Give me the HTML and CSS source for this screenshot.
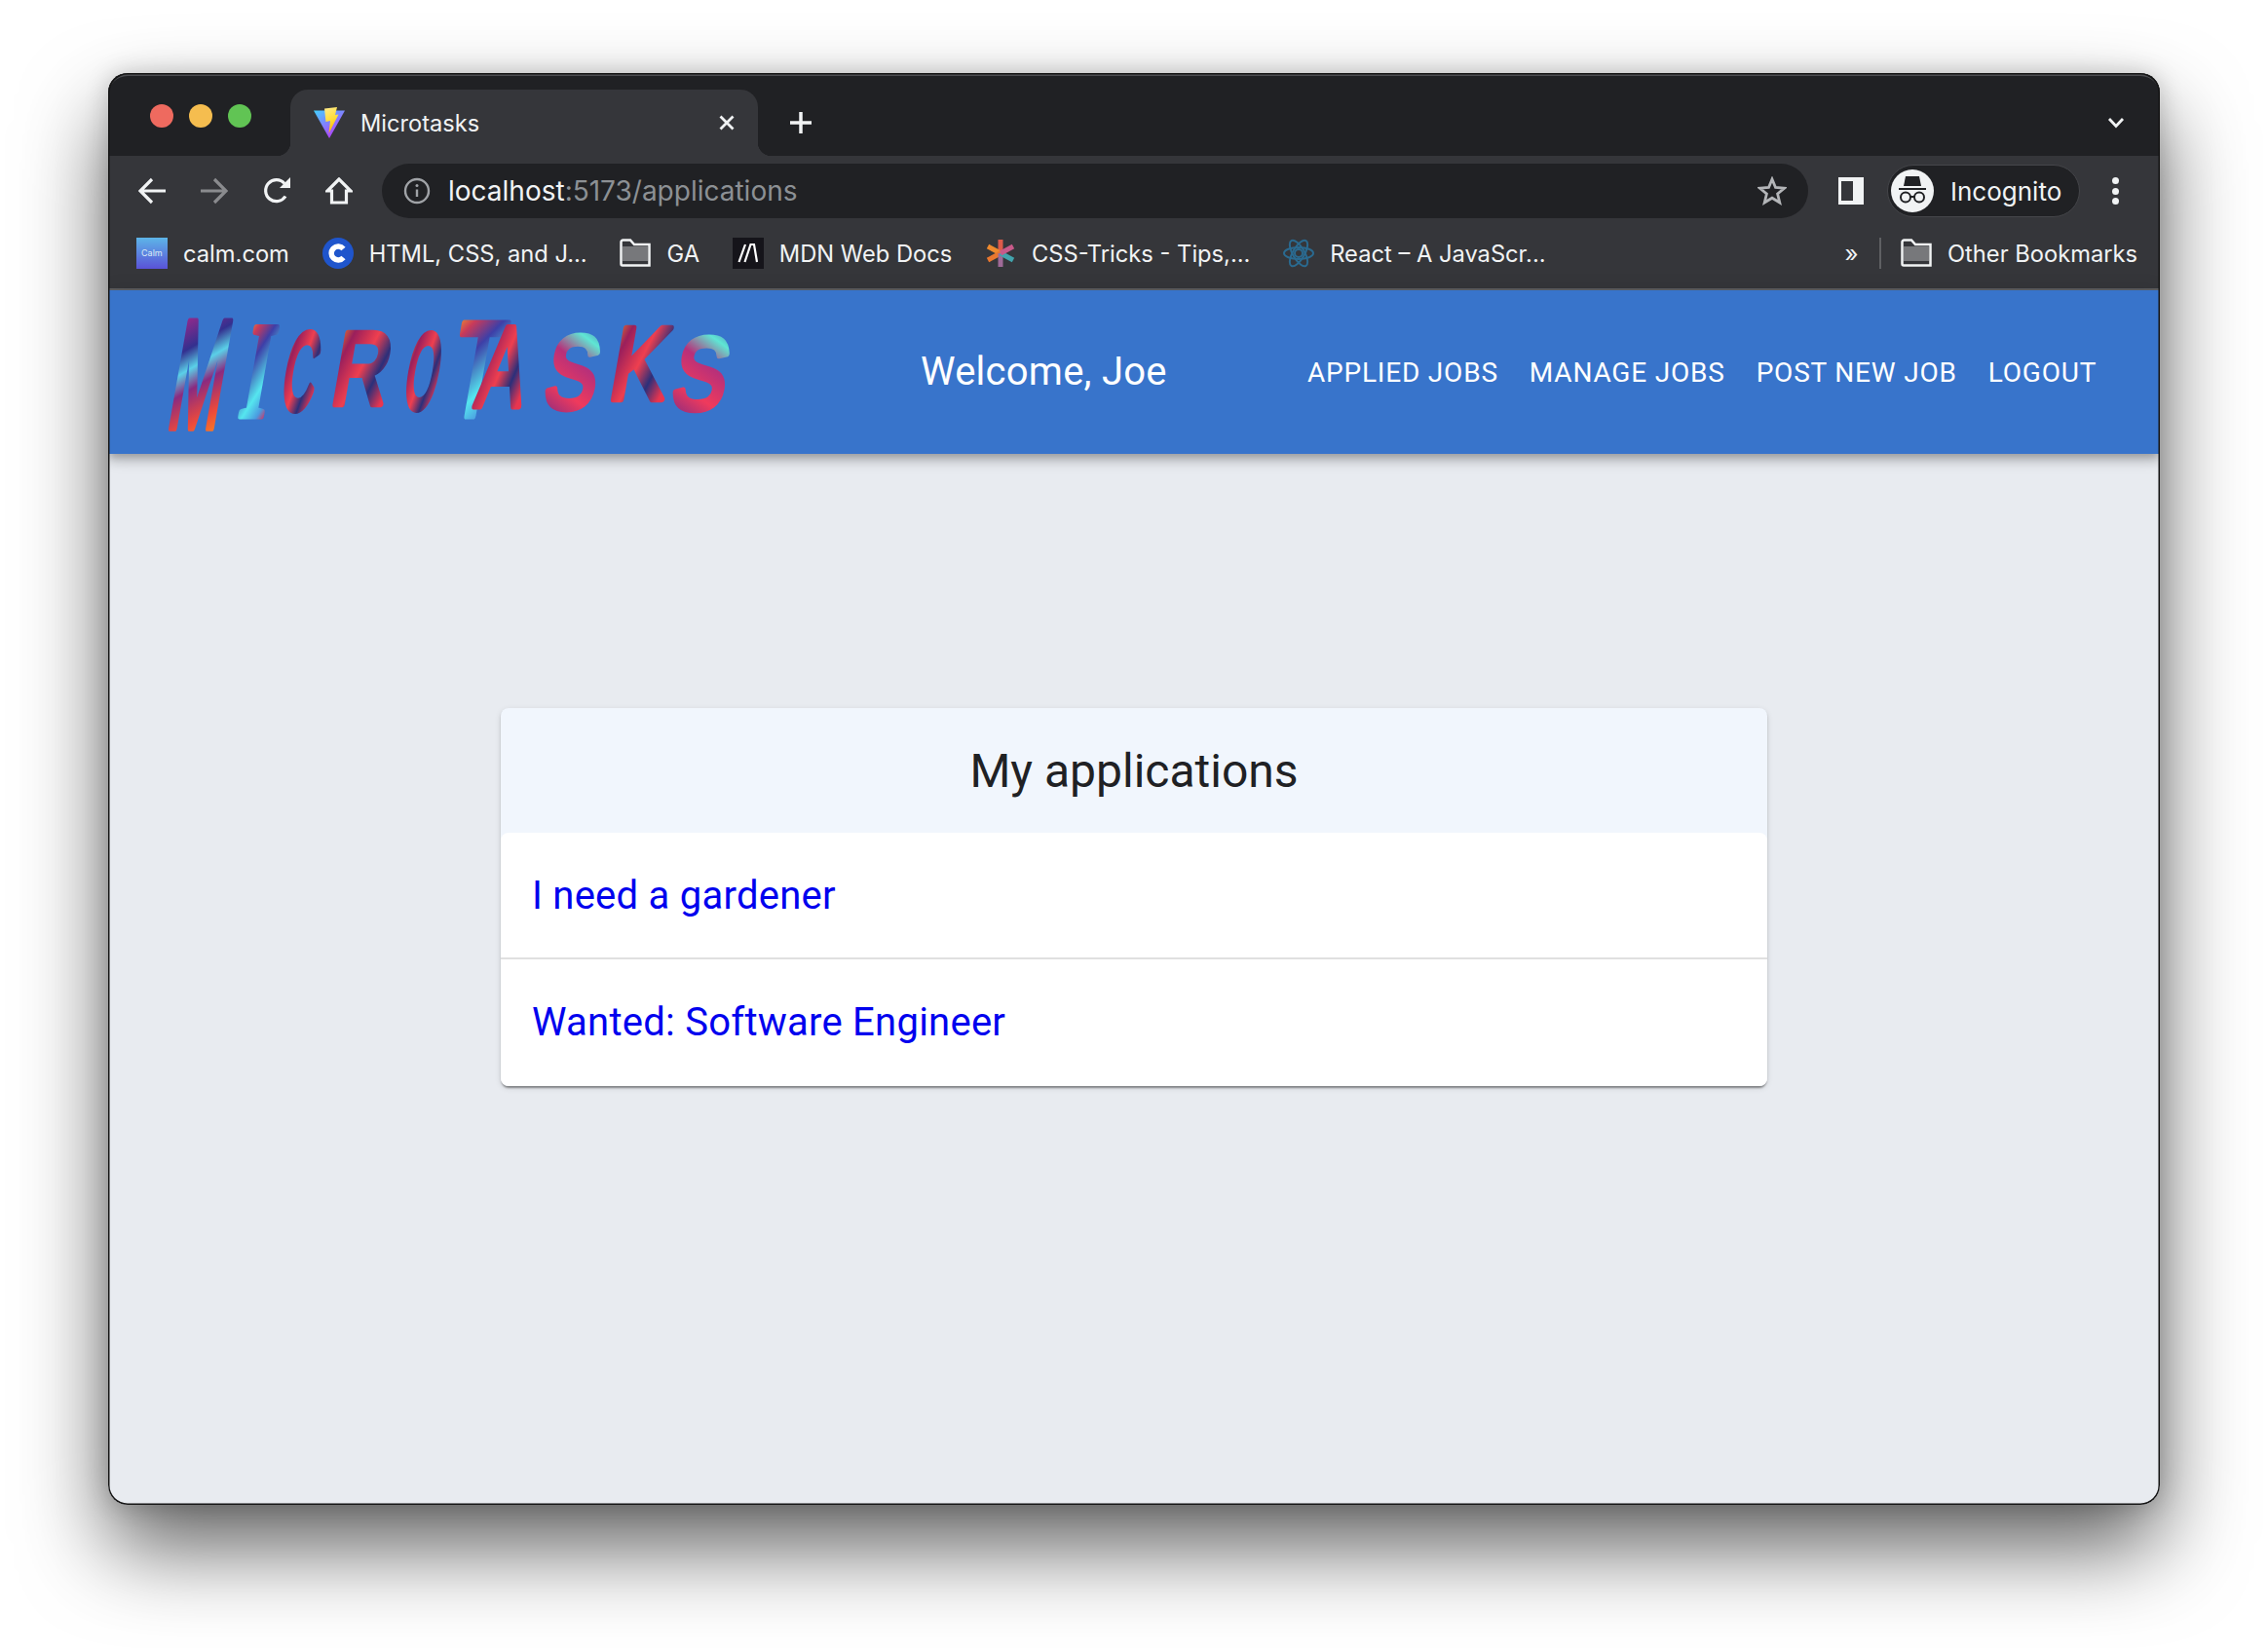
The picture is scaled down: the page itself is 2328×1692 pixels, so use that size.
FILE: index.html
```html
<!DOCTYPE html>
<html lang="en">
<head>
<meta charset="utf-8">
<title>Microtasks</title>
<link rel="stylesheet" href="styles.css">
</head>
<body>
<div class="window">
  <div class="tabstrip">
    <div class="lights"><span class="light red"></span><span class="light yellow"></span><span class="light green"></span></div>
    <div class="tab">
      <svg class="favicon-vite" viewBox="0 0 32 32">
        <defs>
          <linearGradient id="vt" x1="0" y1="0" x2="0.7" y2="1"><stop offset="0" stop-color="#41d1ff"/><stop offset="1" stop-color="#bd34fe"/></linearGradient>
          <linearGradient id="vb" x1="0.3" y1="0" x2="0.6" y2="1"><stop offset="0" stop-color="#ffea83"/><stop offset="0.5" stop-color="#ffdd35"/><stop offset="1" stop-color="#ffa800"/></linearGradient>
        </defs>
        <polygon points="0,3.5 32,3.5 16,32" fill="url(#vt)"/>
        <polygon points="11,1.5 24,0 22,8 25.5,7.5 15.5,27 17,14 12.5,15" fill="url(#vb)"/>
      </svg>
      <span class="tab-title">Microtasks</span>
      <svg class="tab-close" viewBox="0 0 16 16"><path d="M1.500 1.500 14.500 14.500M14.500 1.500 1.500 14.500"/></svg>
    </div>
    <svg class="new-tab" viewBox="0 0 24 24"><path d="M12 1V23M1 12H23"/></svg>
    <svg class="tab-menu" viewBox="0 0 18 12"><path d="M2 2 9 9.500 16 2"/></svg>
  </div>

  <div class="toolbar">
    <div class="navbtn"><svg class="ico" viewBox="0 0 28 28"><path d="M28 14H2M14 2 2 14 14 26"/></svg></div>
    <div class="navbtn off"><svg class="ico" viewBox="0 0 28 28"><path d="M0 14H26M14 2 26 14 14 26"/></svg></div>
    <div class="navbtn"><svg class="ico" viewBox="0 0 28 28"><path d="M23 19.500A11 11 0 1 1 22 6.500"/><polygon class="solid" points="28,0 28,11 17,11"/></svg></div>
    <div class="navbtn"><svg class="ico" viewBox="0 0 28 28"><path d="M14 2 2 14H6.500V26H21.500V14H26Z"/></svg></div>
    <div class="omnibox">
      <svg class="info" viewBox="0 0 28 28"><circle cx="14" cy="14" r="12"/><path d="M14 12.500V20"/><circle class="dot" cx="14" cy="8.500" r="1.500"/></svg>
      <span class="url"><span class="host">localhost</span>:5173/applications</span>
      <svg class="star" viewBox="0 0 30 30"><polygon points="15,3 18.500,11.500 27.500,12.200 20.600,18 22.800,27 15,22.200 7.200,27 9.400,18 2.500,12.200 11.500,11.500"/></svg>
    </div>
    <div class="sidepanel"><span class="sidepanel-hole"></span></div>
    <div class="profile">
      <svg class="avatar" viewBox="0 0 44 44">
        <circle cx="22" cy="22" r="22" fill="#f1f3f4"/>
        <polygon points="15,7 29,7 31,17 13,17" fill="#202124"/>
        <rect x="8" y="19" width="28" height="2" fill="#202124"/>
        <circle cx="15" cy="28.500" r="5" fill="none" stroke="#202124" stroke-width="2"/>
        <circle cx="29" cy="28.500" r="5" fill="none" stroke="#202124" stroke-width="2"/>
        <rect x="19" y="27" width="6" height="2" fill="#202124"/>
      </svg>
      <span class="profile-name">Incognito</span>
    </div>
    <div class="kebab"><span></span><span></span><span></span></div>
  </div>

  <div class="bookmarks">
    <div class="bm">
      <svg class="bm-ico" viewBox="0 0 32 32">
        <defs><linearGradient id="cg" x1="0" y1="0" x2="0" y2="1"><stop offset="0" stop-color="#5db5e8"/><stop offset="1" stop-color="#5a52d8"/></linearGradient></defs>
        <rect width="32" height="32" fill="url(#cg)"/>
        <text x="5" y="19" class="calm-mark">Calm</text>
      </svg>
      <span>calm.com</span>
    </div>
    <div class="bm">
      <svg class="bm-ico" viewBox="0 0 32 32"><circle cx="16" cy="16" r="16" fill="#1f55cc"/><path d="M21.500 11.500A7 7 0 1 0 21.500 20.500" fill="none" stroke="#fff" stroke-width="5.500"/></svg>
      <span>HTML, CSS, and J...</span>
    </div>
    <div class="bm">
      <svg class="bm-ico" viewBox="0 0 32 32"><path class="folder" d="M1.500 27V4.500A2 2 0 0 1 3.500 2.500H11L15 7H30.500V28.500H3A1.500 1.500 0 0 1 1.500 27Z"/><path class="folder-fill" d="M3 9H29V24H3Z"/></svg>
      <span>GA</span>
    </div>
    <div class="bm">
      <svg class="bm-ico" viewBox="0 0 32 32"><rect width="32" height="32" fill="#15141a"/><path d="M6.500 25 13 7M12.500 25 18.500 7H22L25 25" fill="none" stroke="#fff" stroke-width="2.200"/></svg>
      <span>MDN Web Docs</span>
    </div>
    <div class="bm">
      <svg class="bm-ico" viewBox="0 0 32 32">
        <g stroke-width="5">
          <line x1="16" y1="16" x2="16" y2="2" stroke="#dd5b4a"/>
          <line x1="16" y1="16" x2="3" y2="9" stroke="#ef8a2e"/>
          <line x1="16" y1="16" x2="3" y2="23" stroke="#e9772f"/>
          <line x1="16" y1="16" x2="16" y2="30" stroke="#a06a98"/>
          <line x1="16" y1="16" x2="29" y2="23" stroke="#42a4ad"/>
          <line x1="16" y1="16" x2="29" y2="9" stroke="#c85a8a"/>
        </g>
      </svg>
      <span>CSS-Tricks - Tips,...</span>
    </div>
    <div class="bm">
      <svg class="bm-ico" viewBox="0 0 32 32">
        <g fill="none" stroke="#2a6a90" stroke-width="2">
          <ellipse cx="16" cy="16" rx="15" ry="6"/>
          <ellipse cx="16" cy="16" rx="15" ry="6" transform="rotate(60 16 16)"/>
          <ellipse cx="16" cy="16" rx="15" ry="6" transform="rotate(120 16 16)"/>
          <circle cx="16" cy="16" r="4"/>
        </g>
      </svg>
      <span>React – A JavaScr...</span>
    </div>
    <span class="bm-more">»</span>
    <span class="bm-sep"></span>
    <div class="bm">
      <svg class="bm-ico" viewBox="0 0 32 32"><path class="folder" d="M1.500 27V4.500A2 2 0 0 1 3.500 2.500H11L15 7H30.500V28.500H3A1.500 1.500 0 0 1 1.500 27Z"/><path class="folder-fill" d="M3 9H29V24H3Z"/></svg>
      <span>Other Bookmarks</span>
    </div>
  </div>

  <div class="page">
    <header class="appbar">
      <svg class="logo" viewBox="0 0 620 168" role="img" aria-label="Microtasks">
        <defs>
          <linearGradient id="la" x1="0.3" y1="0" x2="0.5" y2="1">
            <stop offset="0" stop-color="#f08a2a"/><stop offset="0.14" stop-color="#8a2a8c"/><stop offset="0.32" stop-color="#33308f"/><stop offset="0.45" stop-color="#5ad0e8"/><stop offset="0.58" stop-color="#8a2a80"/><stop offset="0.8" stop-color="#ee4a3a"/><stop offset="1" stop-color="#f9921e"/>
          </linearGradient>
          <linearGradient id="lb" x1="0.2" y1="0" x2="0.6" y2="1">
            <stop offset="0" stop-color="#f5a623"/><stop offset="0.18" stop-color="#c93a5a"/><stop offset="0.38" stop-color="#3d3fa8"/><stop offset="0.7" stop-color="#55e6ef"/><stop offset="0.88" stop-color="#4a9ae0"/><stop offset="1" stop-color="#d92a5a"/>
          </linearGradient>
          <linearGradient id="lc" x1="0" y1="0" x2="1" y2="0.7">
            <stop offset="0" stop-color="#f7931e"/><stop offset="0.25" stop-color="#9a1f5c"/><stop offset="0.55" stop-color="#ef3f4f"/><stop offset="0.78" stop-color="#2b2f7a"/><stop offset="1" stop-color="#e8354f"/>
          </linearGradient>
          <linearGradient id="ld" x1="0.7" y1="0" x2="0.4" y2="1">
            <stop offset="0" stop-color="#4b5fb0"/><stop offset="0.2" stop-color="#5fe6d4"/><stop offset="0.42" stop-color="#b7307a"/><stop offset="0.7" stop-color="#ef3a5c"/><stop offset="1" stop-color="#7c2a86"/>
          </linearGradient>
        </defs>
        <g class="logo-letters">
          <text transform="translate(19.500,140.500) skewX(-10) scale(.65,1.58)" fill="url(#la)" stroke="url(#la)">M</text>
          <text class="serif" transform="translate(93.500,128.500) skewX(-10) scale(.85,1.38)" fill="url(#lb)" stroke="url(#lb)">I</text>
          <text transform="translate(136,121.500) skewX(-10) scale(.46,1.12)" fill="url(#lc)" stroke="url(#lc)">C</text>
          <text transform="translate(187.500,116.500) skewX(-10) scale(.79,1.06)" fill="url(#lc)" stroke="url(#lc)">R</text>
          <text transform="translate(262,120.500) skewX(-10) scale(.42,1.09)" fill="url(#lc)" stroke="url(#lc)">O</text>
          <text transform="translate(307.500,128.500) skewX(-10) scale(.82,1.38)" fill="url(#lb)" stroke="url(#lb)">T</text>
          <text transform="translate(336.500,118.500) skewX(-10) scale(.7,1.17)" fill="url(#lc)" stroke="url(#lc)">A</text>
          <text transform="translate(405.500,120.500) skewX(-10) scale(.79,1.06)" fill="url(#ld)" stroke="url(#ld)">S</text>
          <text transform="translate(472.500,111.500) skewX(-10) scale(.87,1.06)" fill="url(#lc)" stroke="url(#lc)">K</text>
          <text transform="translate(536.500,121.500) skewX(-10) scale(.82,1.05)" fill="url(#ld)" stroke="url(#ld)">S</text>
        </g>
      </svg>
      <div class="welcome">Welcome, Joe</div>
      <nav class="nav">
        <a class="nav-link">APPLIED JOBS</a>
        <a class="nav-link">MANAGE JOBS</a>
        <a class="nav-link">POST NEW JOB</a>
        <a class="nav-link">LOGOUT</a>
      </nav>
    </header>
    <main class="main">
      <section class="card">
        <h2 class="card-title">My applications</h2>
        <ul class="list">
          <li class="list-item"><a class="job">I need a gardener</a></li>
          <li class="list-item"><a class="job">Wanted: Software Engineer</a></li>
        </ul>
      </section>
    </main>
  </div>
</div>
</body>
</html>
```
FILE: styles.css
```css
* { box-sizing: border-box; }
html, body { margin: 0; padding: 0; }
body {
  width: 2328px;
  height: 1692px;
  padding: 75px 111px 0;
  background: #fff;
  font-family: Roboto, "Liberation Sans", sans-serif;
  overflow: hidden;
}
.window {
  width: 2106px;
  height: 1470px;
  border-radius: 20px;
  display: flex;
  flex-direction: column;
  position: relative;
  overflow: hidden;
  background: #202124;
  box-shadow: 0 44px 88px rgba(0,0,0,.62), 0 0 24px rgba(0,0,0,.18);
}
.window::after {
  content: "";
  position: absolute;
  inset: 0;
  border-radius: 20px;
  box-shadow: inset 0 0 0 1.5px #141414, inset 0 3px 0 #4c4d51;
  pointer-events: none;
}

/* tab strip */
.tabstrip {
  height: 85px;
  flex: none;
  background: #202124;
  display: flex;
  align-items: flex-end;
  position: relative;
}
.lights { display: flex; gap: 16px; align-self: flex-start; margin: 32px 0 0 43px; }
.light { width: 24px; height: 24px; border-radius: 50%; }
.red { background: #ee6a5f; }
.yellow { background: #f5bd4f; }
.green { background: #61c454; }
.tab {
  width: 480px;
  height: 68px;
  margin-left: 40px;
  background: #35363a;
  border-radius: 18px 18px 0 0;
  display: flex;
  align-items: center;
  padding: 0 24px;
  position: relative;
}
.tab::before, .tab::after {
  content: "";
  position: absolute;
  bottom: 0;
  width: 14px;
  height: 14px;
}
.tab::before { left: -14px; background: radial-gradient(circle at 0 0, transparent 14px, #35363a 14.5px); }
.tab::after { right: -14px; background: radial-gradient(circle at 100% 0, transparent 14px, #35363a 14.5px); }
.favicon-vite { width: 32px; height: 32px; flex: none; }
.tab-title {
  margin-left: 16px;
  font: 400 23.600px Inter, "Liberation Sans", sans-serif;
  color: #f1f3f4;
  flex: 1;
}
.tab-close { width: 16px; height: 16px; fill: none; stroke: #f1f3f4; stroke-width: 2.800; }
.new-tab { width: 24px; height: 24px; fill: none; stroke: #f1f3f4; stroke-width: 3.500; margin: 0 0 22px 32px; }
.tab-menu { width: 18px; height: 12px; fill: none; stroke: #f1f3f4; stroke-width: 2.800; margin: 0 36px 28px auto; }

/* toolbar */
.toolbar {
  height: 72px;
  flex: none;
  background: #35363a;
  display: flex;
  align-items: center;
  padding: 0 0 0 13px;
}
.navbtn { width: 64px; height: 56px; display: flex; align-items: center; justify-content: center; flex: none; }
.ico { width: 28px; height: 28px; fill: none; stroke: #f1f3f4; stroke-width: 3.200; }
.off .ico { stroke: #8a8b8e; }
.solid { fill: #f1f3f4; stroke: none; }
.omnibox {
  width: 1464px;
  height: 56px;
  margin-left: 12px;
  border-radius: 28px;
  background: #202124;
  display: flex;
  align-items: center;
  padding: 0 22px;
  flex: none;
}
.info { width: 28px; height: 28px; fill: none; stroke: #a0a3a7; stroke-width: 2.400; flex: none; }
.info .dot { fill: #a0a3a7; stroke: none; }
.url {
  margin-left: 18px;
  font: 400 28px Inter, "Liberation Sans", sans-serif;
  color: #8c9094;
  flex: 1;
}
.host { color: #f1f3f4; }
.star { width: 30px; height: 30px; fill: none; stroke: #b3b5b8; stroke-width: 2.800; flex: none; }
.sidepanel {
  width: 26px;
  height: 28px;
  margin-left: 31px;
  background: #f1f3f4;
  padding: 4px 11px 4px 3px;
  flex: none;
}
.sidepanel-hole { display: block; width: 100%; height: 100%; background: #35363a; }
.profile {
  width: 198px;
  height: 54px;
  margin-left: 24px;
  border-radius: 27px;
  background: #202124;
  border: 1.500px solid #45464a;
  display: flex;
  align-items: center;
  padding-left: 3px;
  flex: none;
}
.avatar { width: 44px; height: 44px; flex: none; }
.profile-name { margin-left: 17px; font: 400 26px Inter, "Liberation Sans", sans-serif; color: #f1f3f4; }
.kebab { display: flex; flex-direction: column; gap: 3.500px; margin-left: 33px; flex: none; }
.kebab span { width: 7px; height: 7px; border-radius: 50%; background: #f1f3f4; }

/* bookmarks */
.bookmarks {
  height: 66px;
  flex: none;
  background: #35363a;
  border-bottom: 2px solid #5f6063;
  display: flex;
  align-items: center;
  padding: 0 23px 8px 29px;
  gap: 33.800px;
}
.bm {
  display: flex;
  align-items: center;
  gap: 16px;
  font: 400 23.700px Inter, "Liberation Sans", sans-serif;
  color: #f1f3f4;
  white-space: nowrap;
}
.bm-ico { width: 32px; height: 32px; flex: none; }
.calm-mark { font: 400 9px Inter, sans-serif; fill: #dbeaf6; }
.folder { fill: none; stroke: #f1f3f4; stroke-width: 2.500; }
.folder-fill { fill: #77787b; }
.bm-more { margin-left: auto; font: 400 24px Inter, sans-serif; color: #f1f3f4; }
.bm-sep { width: 2px; height: 32px; background: #5f6063; margin: 0 -14px 0 -12px; }

/* page */
.page { flex: 1; display: flex; flex-direction: column; background: #e8ebf0; min-height: 0; }
.appbar {
  height: 168px;
  flex: none;
  background: #3874cb;
  display: flex;
  align-items: center;
  padding: 0 48.800px 0 39px;
  color: #fff;
  box-shadow: 0 4px 8px -2px rgba(0,0,0,.2), 0 8px 10px rgba(0,0,0,.14), 0 2px 20px rgba(0,0,0,.12);
  position: relative;
}
.logo { width: 620px; height: 168px; flex: none; }
.logo-letters text { font: 400 100px "Liberation Sans", sans-serif; stroke-linejoin: round; vector-effect: non-scaling-stroke; }
.logo-letters { stroke-width: 6; }
.logo-letters .serif { font-family: "Liberation Serif", serif; }
.welcome { margin-left: 175px; font-size: 40px; letter-spacing: .25px; line-height: 1.2; white-space: nowrap; }
.nav { margin-left: auto; display: flex; }
.nav-link {
  padding: 12px 16px;
  font-size: 28px;
  font-weight: 400;
  letter-spacing: .8px;
  line-height: 1.75;
  white-space: nowrap;
}
.main { flex: 1; padding-top: 261px; display: flex; justify-content: center; align-items: flex-start; }
.card {
  width: 1300px;
  border-radius: 8px;
  background: #f1f6fd;
  box-shadow: 0 4px 2px -2px rgba(0,0,0,.25), 0 2px 2px rgba(0,0,0,.18), 0 2px 6px rgba(0,0,0,.12);
}
.card-title {
  margin: 0;
  height: 128px;
  display: flex;
  align-items: center;
  justify-content: center;
  font-size: 48px;
  font-weight: 400;
  color: #202124;
}
.list { list-style: none; margin: 0; padding: 0; background: #fff; border-radius: 8px; }
.list-item {
  height: 130px;
  padding: 0 32px;
  display: flex;
  align-items: center;
  border-bottom: 2px solid #e0e0e0;
}
.list-item:last-child { border-bottom: 0; padding-bottom: 2px; }
.job { font-size: 40px; letter-spacing: .25px; color: #0000ee; }
```
